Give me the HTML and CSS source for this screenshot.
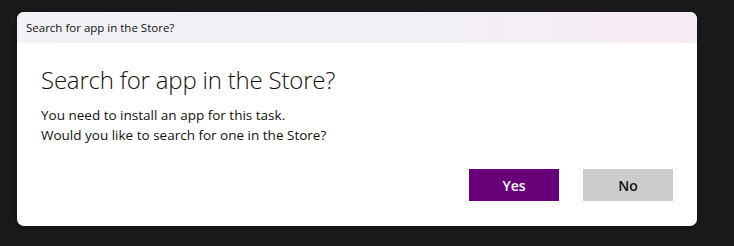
FILE: index.html
```html
<!DOCTYPE html>
<html>
<head>
<meta charset="utf-8">
<link rel="stylesheet" href="styles.css">
</head>
<body>
<div class="dialog">
  <div class="titlebar">Search for app in the Store?</div>
  <div class="content">
    <h1 class="heading">Search for app in the Store?</h1>
    <p class="message">You need to install an app for this task.<br>Would you like to search for one in the Store?</p>
    <div class="actions">
      <button class="btn btn-yes">Yes</button>
      <button class="btn btn-no">No</button>
    </div>
  </div>
</div>
</body>
</html>
```
FILE: styles.css
```css
html, body {
  margin: 0;
  padding: 0;
  background: #1a1a1a;
  width: 734px;
  height: 246px;
  overflow: hidden;
}
body {
  padding: 12px 0 0 17px;
  box-sizing: border-box;
  font-family: "Open Sans", "Noto Sans", sans-serif;
}
.dialog {
  width: 680px;
  height: 214px;
  background: #ffffff;
  border-radius: 7px;
  overflow: hidden;
  display: flex;
  flex-direction: column;
  box-shadow: 0 2px 8px rgba(0,0,0,0.35);
}
.titlebar {
  height: 31px;
  flex: none;
  display: flex;
  align-items: center;
  padding-left: 9px;
  font-size: 11.5px;
  color: #111;
  background: linear-gradient(90deg, #f2f1f7 0%, #f2f0f7 55%, #f6ebf5 100%);
}
.content {
  flex: 1;
  display: flex;
  flex-direction: column;
  padding: 21px 24px 0 24px;
}
.heading {
  margin: 0;
  font-weight: 300;
  font-size: 24px;
  line-height: 32px;
  color: #111;
  letter-spacing: -0.2px;
}
.message {
  margin: 9px 0 0 0;
  font-size: 13.5px;
  line-height: 20px;
  color: #111;
}
.actions {
  display: flex;
  justify-content: flex-end;
  gap: 24px;
  margin-top: 24px;
}
.btn {
  width: 90px;
  height: 32px;
  border: none;
  font-family: "Open Sans", "Noto Sans", sans-serif;
  font-size: 14px;
  font-weight: 600;
  padding: 0;
}
.btn-yes {
  background: #68007a;
  color: #fff;
}
.btn-no {
  background: #cccccc;
  color: #111;
}
```
